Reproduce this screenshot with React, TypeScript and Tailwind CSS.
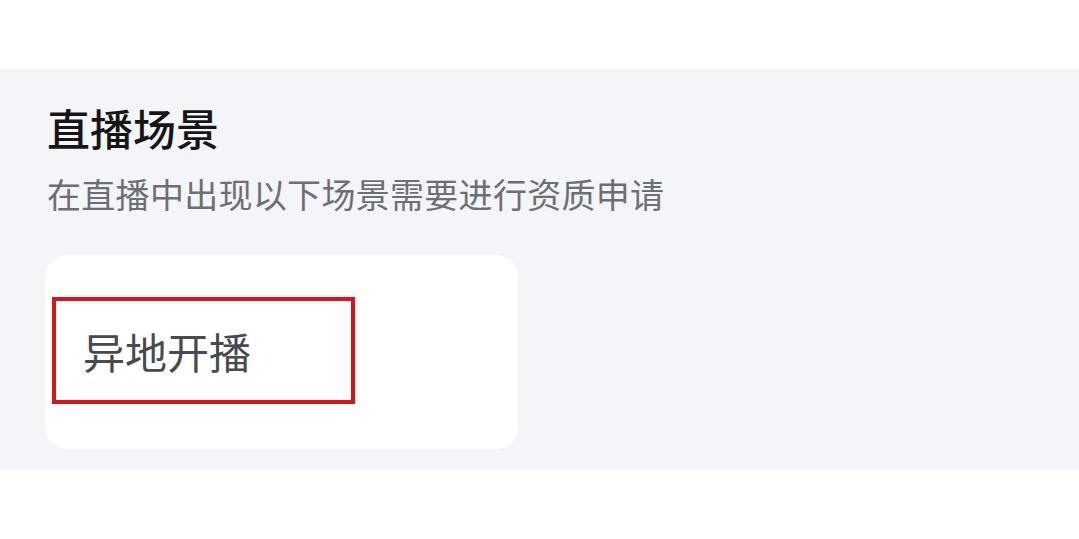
import React from 'react';

const cjk = { fontFamily: '"Noto Sans CJK SC", "Noto Sans", sans-serif' };

const App = () => {
  return (
    <div className="w-[1079px] h-[539px] bg-white pt-[69px]" style={cjk}>
      <div className="h-[401px] bg-[#f3f5f8] pl-[45px] pt-[37px]">
        <h2 className="ml-[2px] text-[43px] leading-none font-medium text-[#161616]">直播场景</h2>
        <p className="ml-[2px] mt-[28px] text-[34px] leading-none tracking-[0.3px] text-[#6c6f74]">
          在直播中出现以下场景需要进行资质申请
        </p>
        <div className="mt-[44px] w-[473px] h-[194px] rounded-[22px] bg-white pl-[7px] pt-[42px]">
          <div className="w-[303px] h-[107px] border-[4px] border-[#d9141b] flex items-center pl-[27px]">
            <span className="text-[42px] leading-none text-[#474a4f]">异地开播</span>
          </div>
        </div>
      </div>
    </div>
  );
};

export default App;
